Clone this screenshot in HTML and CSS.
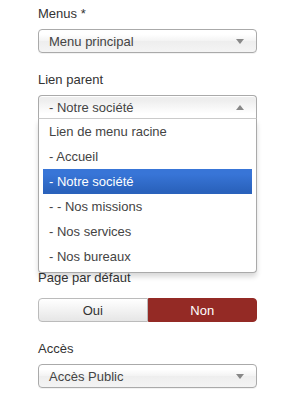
FILE: index.html
```html
<!DOCTYPE html>
<html lang="fr">
<head>
    <meta charset="UTF-8">
    <title>Élément de menu</title>
    <link rel="stylesheet" href="styles.css">
</head>
<body>
    <div class="form">
        <div class="field">
            <label class="field-label">Menus *</label>
            <div class="select">
                <span>Menu principal</span>
                <span class="arrow"></span>
            </div>
        </div>

        <div class="field parent-field">
            <label class="field-label">Lien parent</label>
            <div class="select open">
                <span>- Notre société</span>
                <span class="arrow up"></span>
            </div>
            <ul class="dropdown">
                <li>Lien de menu racine</li>
                <li>- Accueil</li>
                <li class="active">- Notre société</li>
                <li>- - Nos missions</li>
                <li>- Nos services</li>
                <li>- Nos bureaux</li>
            </ul>
        </div>

        <!-- fields hidden under the open dropdown -->
        <div class="covered"></div>

        <div class="field">
            <label class="field-label">Page par défaut</label>
            <div class="btn-group">
                <button class="btn">Oui</button>
                <button class="btn btn-danger">Non</button>
            </div>
        </div>

        <div class="field">
            <label class="field-label">Accès</label>
            <div class="select">
                <span>Accès Public</span>
                <span class="arrow"></span>
            </div>
        </div>
    </div>
</body>
</html>
```

FILE: styles.css
```css
body {
    margin: 0;
    padding: 0;
    background: #fff;
    font-family: "Liberation Sans", Arial, sans-serif;
    font-size: 13px;
    color: #333;
}
.form {
    width: 219px;
    padding: 5px 0 0 38px;
}
.field {
    margin-bottom: 18px;
}
.field-label {
    display: block;
    height: 18px;
    line-height: 18px;
    margin-bottom: 6px;
}
.covered {
    height: 132px;
}
.select {
    box-sizing: border-box;
    height: 24px;
    display: flex;
    align-items: center;
    justify-content: space-between;
    padding: 0 10px;
    border: 1px solid #aaa;
    border-radius: 4px;
    background: linear-gradient(#ffffff 20%, #f3f3f3 50%, #eeeeee 52%, #f4f4f4);
    box-shadow: 0 1px 0 rgba(0, 0, 0, 0.05);
    color: #444;
}
.arrow {
    width: 0;
    height: 0;
    border-left: 4px solid transparent;
    border-right: 4px solid transparent;
    border-top: 5px solid #888;
    margin-right: 2px;
}
.arrow.up {
    border-top: none;
    border-bottom: 5px solid #888;
}
.parent-field {
    position: relative;
}
.select.open {
    border-radius: 4px 4px 0 0;
    border-bottom-color: #ccc;
    background: linear-gradient(#eeeeee 20%, #ffffff 80%);
    box-shadow: 0 1px 0 #fff inset;
}
.dropdown {
    position: absolute;
    top: 48px;
    left: 0;
    right: 0;
    z-index: 10;
    margin: 0;
    padding: 0 4px 3px 4px;
    list-style: none;
    background: #fff;
    border: 1px solid #aaa;
    border-top: none;
    border-radius: 0 0 4px 4px;
    box-shadow: 0 4px 5px rgba(0, 0, 0, 0.15);
    color: #444;
}
.dropdown li {
    height: 25px;
    line-height: 25px;
    padding-left: 6px;
}
.dropdown li.active {
    background: linear-gradient(#3875d7 20%, #2a62bc 90%);
    color: #fff;
}
.btn-group {
    display: flex;
    margin-top: 11px;
}
.btn {
    flex: 1;
    height: 24px;
    margin: 0;
    font-family: inherit;
    font-size: 13px;
    color: #333;
    border: 1px solid #bbb;
    background: linear-gradient(#ffffff, #e6e6e6);
    border-radius: 4px 0 0 4px;
    cursor: pointer;
}
.btn-danger {
    color: #fff;
    background: #942a25;
    border-color: #942a25;
    border-radius: 0 4px 4px 0;
}
```
